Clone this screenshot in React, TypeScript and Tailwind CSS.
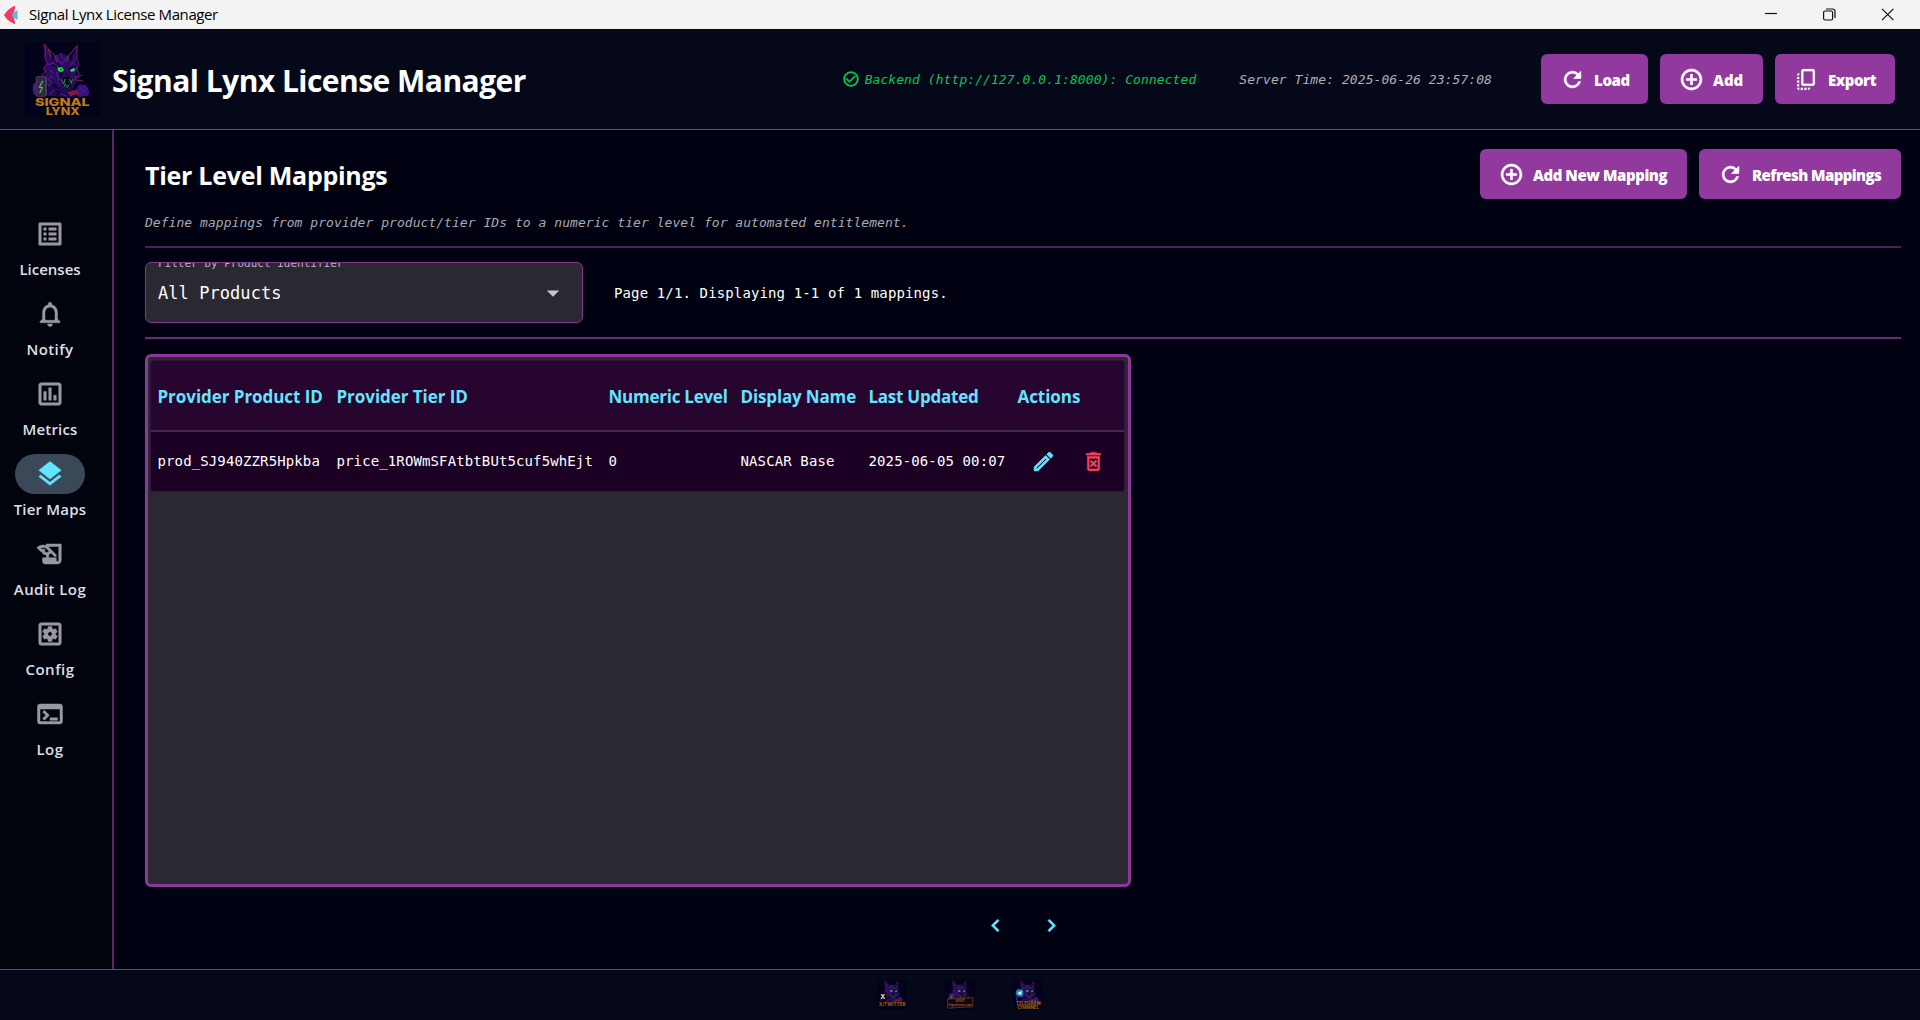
import React from "react";
import {
  MdRefresh, MdAddCircleOutline, MdOutlineCopyAll, MdOutlineListAlt, MdNotificationsNone,
  MdOutlineInsertChartOutlined, MdLayers, MdOutlineHistoryEdu, MdOutlineSettingsApplications, MdOutlineTerminal,
  MdOutlineModeEdit, MdOutlineDeleteForever, MdChevronLeft, MdChevronRight, MdArrowDropDown, MdCheckCircleOutline,
} from "react-icons/md";

const ui = "font-['Open_Sans','Noto_Sans',sans-serif]";
const mono = "font-['DejaVu_Sans_Mono','Liberation_Mono',monospace]";
// The icons carry an invisible bounding path, which must stay unstroked.
const thick = "shrink-0 stroke-current [&_path[fill=none]]:stroke-none ";
const boldIcon = thick + "h-[25px] w-[25px] stroke-[0.6]";

type Badge = "logo" | "x" | "site" | "telegram";

function Lynx({ className, badge }: { className?: string; badge: Badge }) {
  return (
    <svg viewBox="15 15 225 225" className={className} fontFamily="Inter, sans-serif" fontWeight="800">
      <rect x="15" y="15" width="225" height="225" fill="#02021a" />
      <path d="M72 22 L104 56 L122 48 L144 56 L172 26 L168 70 L174 96 L168 112 L172 130 L160 150 L150 166 L130 168 L112 158 L84 150 L70 128 L78 104 L70 96 L82 80 L74 56Z" fill="#2a0d5e" />
      <path d="M84 150 L76 176 L160 180 L172 168 L152 150Z" fill="#230a50" />
      <path d="M38 150 Q36 136 48 138 L54 128 L52 172 L42 174 Q36 164 38 150Z M172 150 Q176 138 188 144 Q198 138 202 152 Q212 166 204 176 L176 180 L164 166Z" fill="#371278" />
      <path d="M72 22 L104 56 L98 72 L88 48Z M172 26 L144 56 L152 72 L162 48Z" fill="#0d0328" />
      <path d="M92 84 L112 78 L128 92 L124 100 L108 88Z M142 96 L160 86 L172 90 L150 100Z M116 110 L132 104 L124 124Z M90 134 L108 142 L116 156 L96 148Z M110 160 L128 170 L108 176Z" fill="#10062e" />
      <g fill="none" strokeWidth="2.4">
        <path d="M72 22 L78 44 L74 58 L82 80 L70 96 L78 104 L64 114 L72 122" stroke="#971d86" />
        <path d="M72 22 L104 56 L112 76 M172 26 L146 56 L140 74 M84 36 L94 62" stroke="#b03a3c" />
        <path d="M172 26 L170 64 L176 80 L170 96 L178 110 L170 124" stroke="#971d86" />
        <path d="M108 54 L116 70 L126 82 L140 60 M122 48 L128 64 M84 84 L100 78 L118 92 M96 116 L86 128 L96 138 L84 146 M150 84 L164 74 M110 104 L116 130 M46 146 L40 160 M180 152 L196 168 M190 146 L204 160 M100 160 L90 174 M172 176 L184 166 M120 170 L140 178 M88 98 L100 108" stroke="#6a21b8" />
        <path d="M162 122 L186 114 M162 128 L190 132" stroke="#8a2a60" />
        <path d="M144 168 L168 160 L176 168 L150 176" stroke="#a51f3c" fill="#7d1830" />
      </g>
      <path d="M112 92 L126 90 L132 100 L124 105 L115 102Z M150 98 L164 92 L164 102 L154 105Z" fill="#39d64e" />
      <circle cx="123" cy="97" r="2.5" fill="#0a2010" />
      <path d="M134 108 L148 108 L142 117Z" fill="#111028" />
      <path d="M122 126 L140 118 L158 126 L152 150 L132 150Z" fill="#08081c" />
      <path d="M124 126 L131 141 L136 126 M148 126 L154 139 L157 126 M132 150 L136 141 L142 151 L148 142" stroke="#2f9a58" strokeWidth="2.8" fill="none" />
      {(badge === "logo" || badge === "site") && (
        <g>
          <rect x="48" y="118" width="31" height="60" rx="5" fill="#33264f" stroke="#5e466e" strokeWidth="2" />
          <path d="M68 132 L58 150 L67 152 L59 168" fill="none" stroke="#4bd32f" strokeWidth="3.5" />
          <path d="M78 122 V174" stroke="#2f7a42" strokeWidth="2" />
        </g>
      )}
      {badge === "logo" && (
        <g fill="#c27a12" fontSize="31">
          <text x="45" y="207" textLength="164" lengthAdjust="spacingAndGlyphs">SIGNAL</text>
          <text x="77" y="234" textLength="102" lengthAdjust="spacingAndGlyphs">LYNX</text>
        </g>
      )}
      {badge === "x" && (
        <g>
          <rect x="28" y="110" width="58" height="58" rx="10" fill="#04040c" />
          <text x="40" y="157" fontSize="50" fill="#d8d8dc">X</text>
          <text x="28" y="210" fontSize="38" fill="#9a5218" textLength="202" lengthAdjust="spacingAndGlyphs">X/TWITTER</text>
        </g>
      )}
      {badge === "site" && (
        <g>
          <path d="M34 158 L224 148 L224 216 L34 226Z" fill="#0c0614" stroke="#7a3c16" strokeWidth="6" />
          <text x="92" y="182" fontSize="24" fill="#94501a" textLength="72" lengthAdjust="spacingAndGlyphs">VISIT</text>
          <text x="42" y="208" fontSize="26" fill="#94501a" textLength="174" lengthAdjust="spacingAndGlyphs">SignalLynx.com</text>
        </g>
      )}
      {badge === "telegram" && (
        <g>
          <circle cx="64" cy="112" r="29" fill="#1f7db8" />
          <path d="M46 112 L82 96 L76 130 L64 122 L58 128 L57 118Z" fill="#e4f0f8" />
          <g fill="#a05a18" fontSize="34">
            <text x="38" y="202" textLength="184" lengthAdjust="spacingAndGlyphs">TELEGRAM</text>
            <text x="46" y="232" textLength="164" lengthAdjust="spacingAndGlyphs">CHANNEL</text>
          </g>
        </g>
      )}
    </svg>
  );
}

function Btn({ icon, className, children }: { icon: React.ReactNode; className: string; children: React.ReactNode }) {
  return (
    <button className={"flex h-[50px] shrink-0 items-center rounded-md bg-[#91399d] pl-[19px] text-white " + className}>
      {icon}
      <span className="ml-[9px] whitespace-nowrap pt-[2px] text-[15px] font-extrabold leading-5">{children}</span>
    </button>
  );
}

const nav = [
  { name: "Licenses", Icon: MdOutlineListAlt, track: "" },
  { name: "Notify", Icon: MdNotificationsNone, track: "tracking-[0.4px]" },
  { name: "Metrics", Icon: MdOutlineInsertChartOutlined, track: "tracking-[0.2px]" },
  { name: "Tier Maps", Icon: MdLayers, track: "tracking-[0.2px]", active: true },
  { name: "Audit Log", Icon: MdOutlineHistoryEdu, track: "tracking-[0.45px]" },
  { name: "Config", Icon: MdOutlineSettingsApplications, track: "tracking-[0.5px]" },
  { name: "Log", Icon: MdOutlineTerminal, track: "tracking-[0.5px]" },
];

const columns = "grid grid-cols-[179px_272px_132px_128px_149px_1fr] items-center whitespace-nowrap pl-[6.5px]";

export default function App() {
  return (
    <div className={"flex h-[1020px] w-[1920px] flex-col overflow-hidden bg-[#000212] text-white " + ui}>
      <div className="flex h-[29px] shrink-0 items-center bg-[#f3f3f3] text-black">
        <svg viewBox="0 0 20 20" className="ml-[1px] h-5 w-5">
          <path d="M13.6 .8 Q14.6 1 14 3 L12.6 8 Q11.6 10 12.6 12 L14 17 Q14.6 19 13.6 19 Q6 16 3 10 Q7 4 13.6 .8Z" fill="#f03867" />
          <path d="M16.6 5.2 V14.8 Q11 13 11 10 Q12 7 16.6 5.2Z" fill="#5cb9e0" />
        </svg>
        <span className="ml-2 whitespace-nowrap pb-[2px] text-[15px] leading-[18px] tracking-[-0.4px]">Signal Lynx License Manager</span>
        <svg viewBox="0 0 130 13" className="ml-auto mr-[26px] h-[13px] w-[130px]" fill="none" stroke="#111" strokeWidth="1.2">
          <path d="M1 5.5 H13" />
          <rect x="59.6" y="3" width="9" height="9" rx="1.5" />
          <path d="M62 1 H68.5 Q71 1 71 3.5 V10" />
          <path d="M118 .8 L129.4 12.2 M129.4 .8 L118 12.2" />
        </svg>
      </div>

      <header className="flex h-[101px] shrink-0 items-center border-b border-[#85348f] bg-[#040818] px-[25px]">
        <Lynx badge="logo" className="h-[75px] w-[75px] shrink-0" />
        <h1 className="ml-[12px] whitespace-nowrap pt-1 text-[30px] font-bold leading-10 tracking-[-0.53px]">Signal Lynx License Manager</h1>
        <div className={"ml-auto flex items-center whitespace-nowrap text-[13px] italic " + mono}>
          <MdCheckCircleOutline className={thick + "mr-[5px] h-[18px] w-[18px] stroke-[0.5] text-[#05c655]"} />
          <span className="pt-[1px] tracking-[0.07px] text-[#05c655]">Backend (http://127.0.0.1:8000): Connected</span>
          <span className="ml-[43px] mr-[49px] pt-[1px] tracking-[0.07px] text-[#b0b1b8]">Server Time: 2025-06-26 23:57:08</span>
        </div>
        <div className="flex gap-3">
          <Btn className="w-[107px] tracking-[-0.35px]" icon={<MdRefresh className={boldIcon} />}>Load</Btn>
          <Btn className="w-[103px]" icon={<MdAddCircleOutline className={boldIcon} />}>Add</Btn>
          <Btn className="w-[120px] tracking-[-0.45px]" icon={<MdOutlineCopyAll className={thick + "h-[25px] w-[25px] stroke-[0.2]"} />}>Export</Btn>
        </div>
      </header>

      <div className="flex min-h-0 flex-1">
        <nav className="flex w-[114px] shrink-0 flex-col border-r-2 border-[#5d2468] bg-[#01030d] pt-[84px]">
          {nav.map(({ name, Icon, track, active }) => (
            <div key={name} className="flex h-20 w-[100px] flex-col items-center">
              <div className={"flex h-10 w-[70px] items-center justify-center rounded-full " + (active ? "bg-[#3a4858] text-[#64e4ff]" : "text-[#98989e]")}>
                <Icon className={thick + "h-[30px] w-[30px] stroke-[0.4]"} />
              </div>
              <span className={"mt-[5px] whitespace-nowrap text-[15px] font-semibold leading-5 text-[#dedfe5] " + track}>{name}</span>
            </div>
          ))}
        </nav>

        <main className="flex flex-1 flex-col pl-[31px] pr-[19px] pt-[19px]">
          <div className="flex h-[50px] items-center gap-3">
            <h2 className="mr-auto whitespace-nowrap pt-[2px] text-[25px] font-bold leading-8 tracking-[-0.27px]">Tier Level Mappings</h2>
            <Btn className="w-[207px] tracking-[-0.43px]" icon={<MdAddCircleOutline className={boldIcon} />}>Add New Mapping</Btn>
            <Btn className="w-[202px] tracking-[-0.58px]" icon={<MdRefresh className={boldIcon} />}>Refresh Mappings</Btn>
          </div>
          <p className={"flex h-[47px] items-center whitespace-nowrap text-[13px] italic tracking-[0.045px] text-[#a9aab2] " + mono}>
            Define mappings from provider product/tier IDs to a numeric tier level for automated entitlement.
          </p>
          <div className="h-[2px] bg-[#4f1e5c]" />

          <div className={"mt-[14px] flex items-center whitespace-nowrap " + mono}>
            <div className="relative flex h-[61px] w-[438px] items-center overflow-hidden rounded-md border border-[#85348f] bg-[#2a2830] pl-3">
              <span className="pt-[2px] text-[17px] tracking-[0.06px]">All Products</span>
              <MdArrowDropDown className="ml-auto mr-[14px] h-[30px] w-[30px] text-[#c2c5d0]" />
              <div className="absolute -top-[1px] left-[6px] h-[9px] w-[196px] overflow-hidden bg-[#2a2830]">
                <div className="-mt-[5px] pl-[6px] text-[11px] leading-[14px] text-[#b5b6c0]">Filter by Product Identifier</div>
              </div>
            </div>
            <span className="ml-[31px] pt-[2px] text-[14px] tracking-[0.13px]">Page 1/1. Displaying 1-1 of 1 mappings.</span>
          </div>
          <div className="mt-[14px] h-[2px] bg-[#6b2a77]" />

          <section className="mt-[15px] h-[533px] w-[986px] rounded-md border-[3px] border-[#8c3799] bg-[#2a2830] p-[3px] pl-[2px]">
            <div className="overflow-hidden rounded border border-[#34103f] bg-[#1b0024]">
              <div className={"h-[71px] border-b-2 border-[#3d3146] bg-[#26062f] pt-[2px] text-[17px] font-bold tracking-[-0.05px] text-[#64e4ff] " + columns}>
                <span>Provider Product ID</span>
                <span>Provider Tier ID</span>
                <span className="tracking-[-0.25px]">Numeric Level</span>
                <span className="tracking-[-0.15px]">Display Name</span>
                <span className="tracking-[-0.25px]">Last Updated</span>
                <span>Actions</span>
              </div>
              <div className={"h-[59px] text-[14px] tracking-[0.12px] " + columns + " " + mono}>
                <span>prod_SJ940ZZR5Hpkba</span>
                <span>price_1ROWmSFAtbtBUt5cuf5whEjt</span>
                <span>0</span>
                <span>NASCAR Base</span>
                <span>2025-06-05 00:07</span>
                <div className="flex gap-[25px] pb-[1px] pl-[13px]">
                  <MdOutlineModeEdit className={boldIcon + " text-[#64e4ff]"} />
                  <MdOutlineDeleteForever className={thick + "h-[25px] w-[25px] stroke-[0.3] text-[#ef4056]"} />
                </div>
              </div>
            </div>
          </section>

          <div className="mt-[26px] flex gap-[31px] pl-[838px] text-[#64e4ff]">
            <MdChevronLeft className={boldIcon} />
            <MdChevronRight className={boldIcon} />
          </div>
        </main>
      </div>

      <footer className="flex h-[51px] shrink-0 items-center justify-center gap-[38px] border-t border-[#85348f] bg-[#040818]">
        <Lynx badge="x" className="h-[30px] w-[30px]" />
        <Lynx badge="site" className="h-[30px] w-[30px]" />
        <Lynx badge="telegram" className="h-[30px] w-[30px]" />
      </footer>
    </div>
  );
}
